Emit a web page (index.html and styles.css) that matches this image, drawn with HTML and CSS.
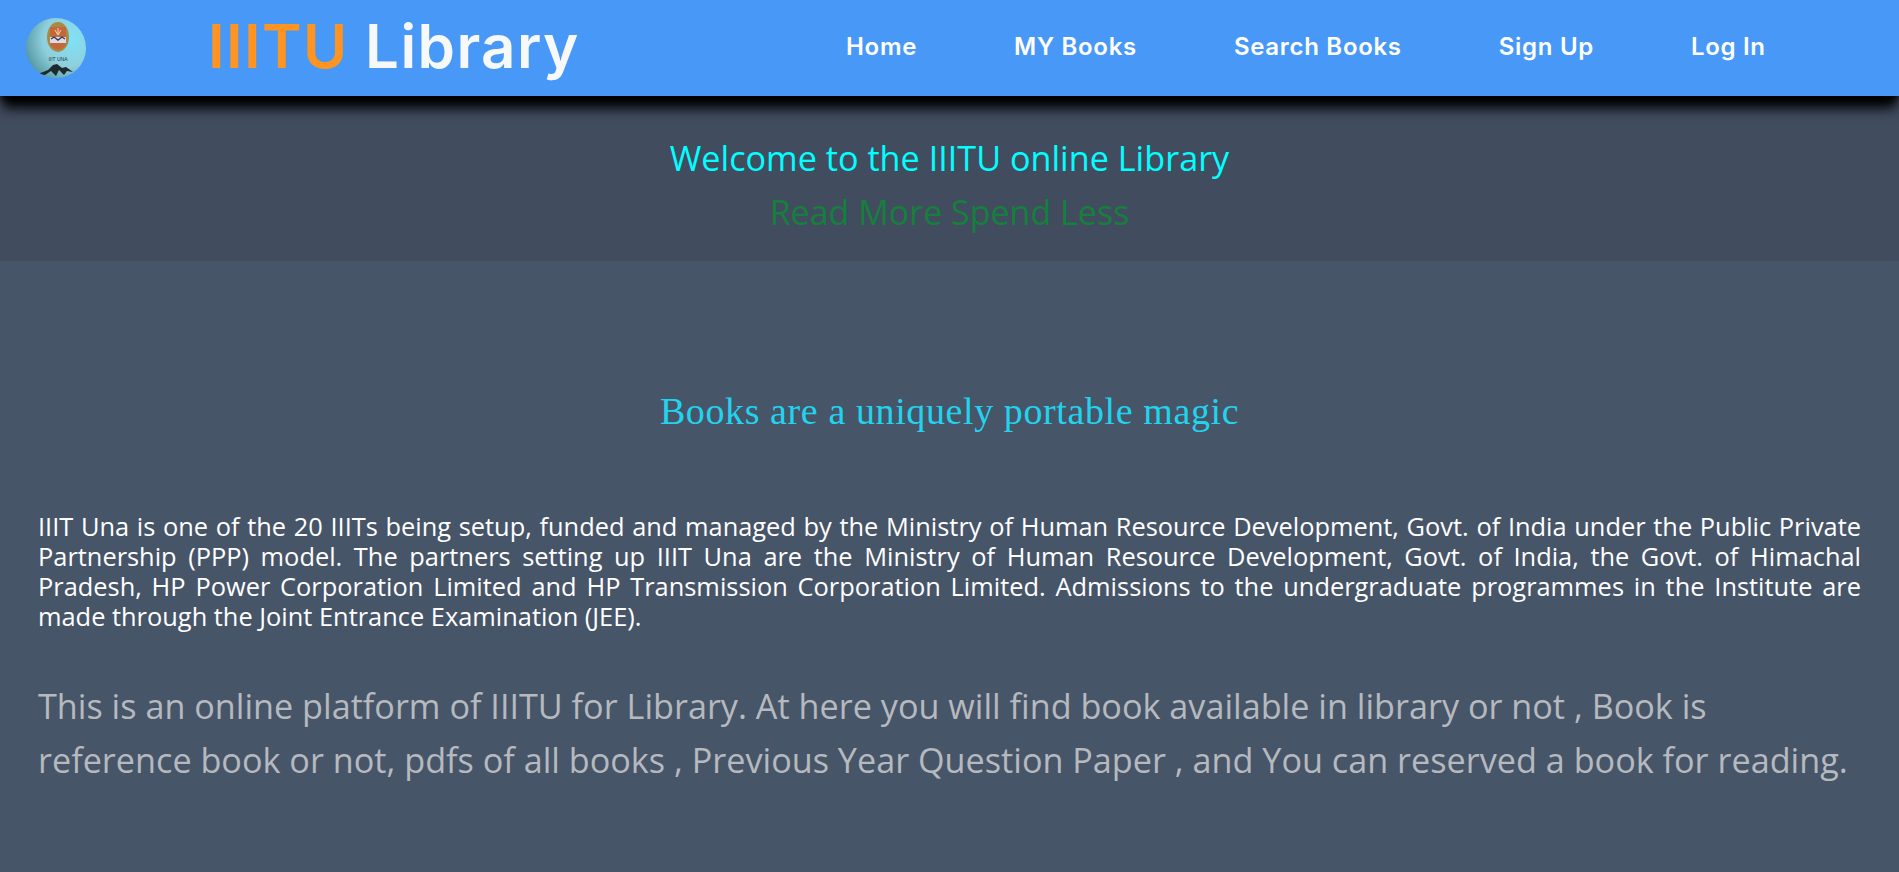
FILE: index.html
```html
<!DOCTYPE html>
<html lang="en">
<head>
<meta charset="utf-8">
<title>IIITU Library</title>
<link rel="stylesheet" href="styles.css">
</head>
<body>
<header class="navbar">
  <svg class="logo" viewBox="0 0 60 60" aria-hidden="true">
    <defs>
      <radialGradient id="g" cx="75%" cy="35%" r="85%"><stop offset="0" stop-color="#7fe2f8"/><stop offset=".55" stop-color="#8fcfdc"/><stop offset="1" stop-color="#4d8f9c"/></radialGradient>
      <clipPath id="c"><circle cx="30" cy="30" r="30"/></clipPath>
    </defs>
    <circle cx="30" cy="30" r="30" fill="url(#g)"/>
    <ellipse cx="32" cy="19" rx="11" ry="15" fill="#a98a45"/>
    <path d="M24 9 H40 V25 Q40 30 32 32 Q24 30 24 25Z" fill="#c4683a"/>
    <rect x="24" y="19" width="16" height="6" fill="#d9dce8"/>
    <path d="M25 21 L28 19 L32 22 L36 19 L39 21" stroke="#3a3a55" stroke-width="1.4" fill="none"/>
    <path d="M32 10 V17 M29 12 L32 17 L35 12" stroke="#ecd6b0" stroke-width="1" fill="none"/>
    <text x="32" y="43" text-anchor="middle" class="logo-text">IIIT UNA</text>
    <g clip-path="url(#c)">
      <path d="M12 56 L22 52 L27 47 L31 46 L36 50 L40 49 L47 54 L41 53 L38 57 L33 52 L30 58 L25 53 L19 57Z" fill="#1f2a2c"/>
    </g>
  </svg>
  <div class="brand"><span class="brand-accent">IIITU</span> Library</div>
  <nav class="nav">
    <a>Home</a><a>MY Books</a><a>Search Books</a><a>Sign Up</a><a>Log In</a>
  </nav>
</header>
<section class="welcome">
  <h1 class="welcome-title">Welcome to the IIITU online Library</h1>
  <h2 class="welcome-sub">Read More Spend Less</h2>
</section>
<main class="content">
  <h3 class="quote">Books are a uniquely portable magic</h3>
  <p class="about">IIIT Una is one of the 20 IIITs being setup, funded and managed by the Ministry of Human Resource Development, Govt. of India under the Public Private Partnership (PPP) model. The partners setting up IIIT Una are the Ministry of Human Resource Development, Govt. of India, the Govt. of Himachal Pradesh, HP Power Corporation Limited and HP Transmission Corporation Limited. Admissions to the undergraduate programmes in the Institute are made through the Joint Entrance Examination (JEE).</p>
  <p class="platform">This is an online platform of IIITU for Library. At here you will find book available in library or not , Book is reference book or not, pdfs of all books , Previous Year Question Paper , and You can reserved a book for reading.</p>
</main>
</body>
</html>
```
FILE: styles.css
```css
* { box-sizing: border-box; }
html, body { margin: 0; height: 100%; }
body { background: #475569; font-family: "Open Sans", "Noto Sans", sans-serif; overflow: hidden; }
.navbar { position: relative; z-index: 2; height: 96px; background: #4899f7; display: flex; align-items: center; padding-left: 26px; box-shadow: 0 15px 12px -3px #000, 0 6px 8px -2px #000; }
.logo { width: 60px; height: 60px; flex: none; }
.logo-text { font-family: "Liberation Sans", sans-serif; font-size: 5px; fill: #2a3338; }
.brand { margin: 0 0 4px 122px; width: 638px; font-family: Inter, sans-serif; font-weight: 600; font-size: 60px; letter-spacing: 1.4px; color: #f7f8fa; }
.brand-accent { color: #ff9420; }
.nav { display: flex; gap: 97px; margin-bottom: 4px; font-family: Inter, sans-serif; font-weight: 600; font-size: 24px; letter-spacing: .7px; color: #fff; }
.welcome { height: 165px; background: #414c5f; text-align: center; padding-top: 35px; }
.welcome-title { margin: 0; font-weight: 400; font-size: 34.2px; line-height: 54px; color: #00ffff; }
.welcome-sub { margin: 0; font-weight: 400; font-size: 34px; line-height: 54px; color: #15803d; }
.content { padding: 128px 38px 0; }
.quote { margin: 0 0 78px; text-align: center; font-family: "Liberation Serif", serif; font-weight: 400; font-size: 38px; letter-spacing: .6px; color: #22d3ee; }
.about { margin: 0; font-size: 25.4px; line-height: 30px; text-align: justify; color: #fff; }
.platform { margin: 48px 0 0; font-size: 34.2px; line-height: 54px; color: #b6b9be; }
```
